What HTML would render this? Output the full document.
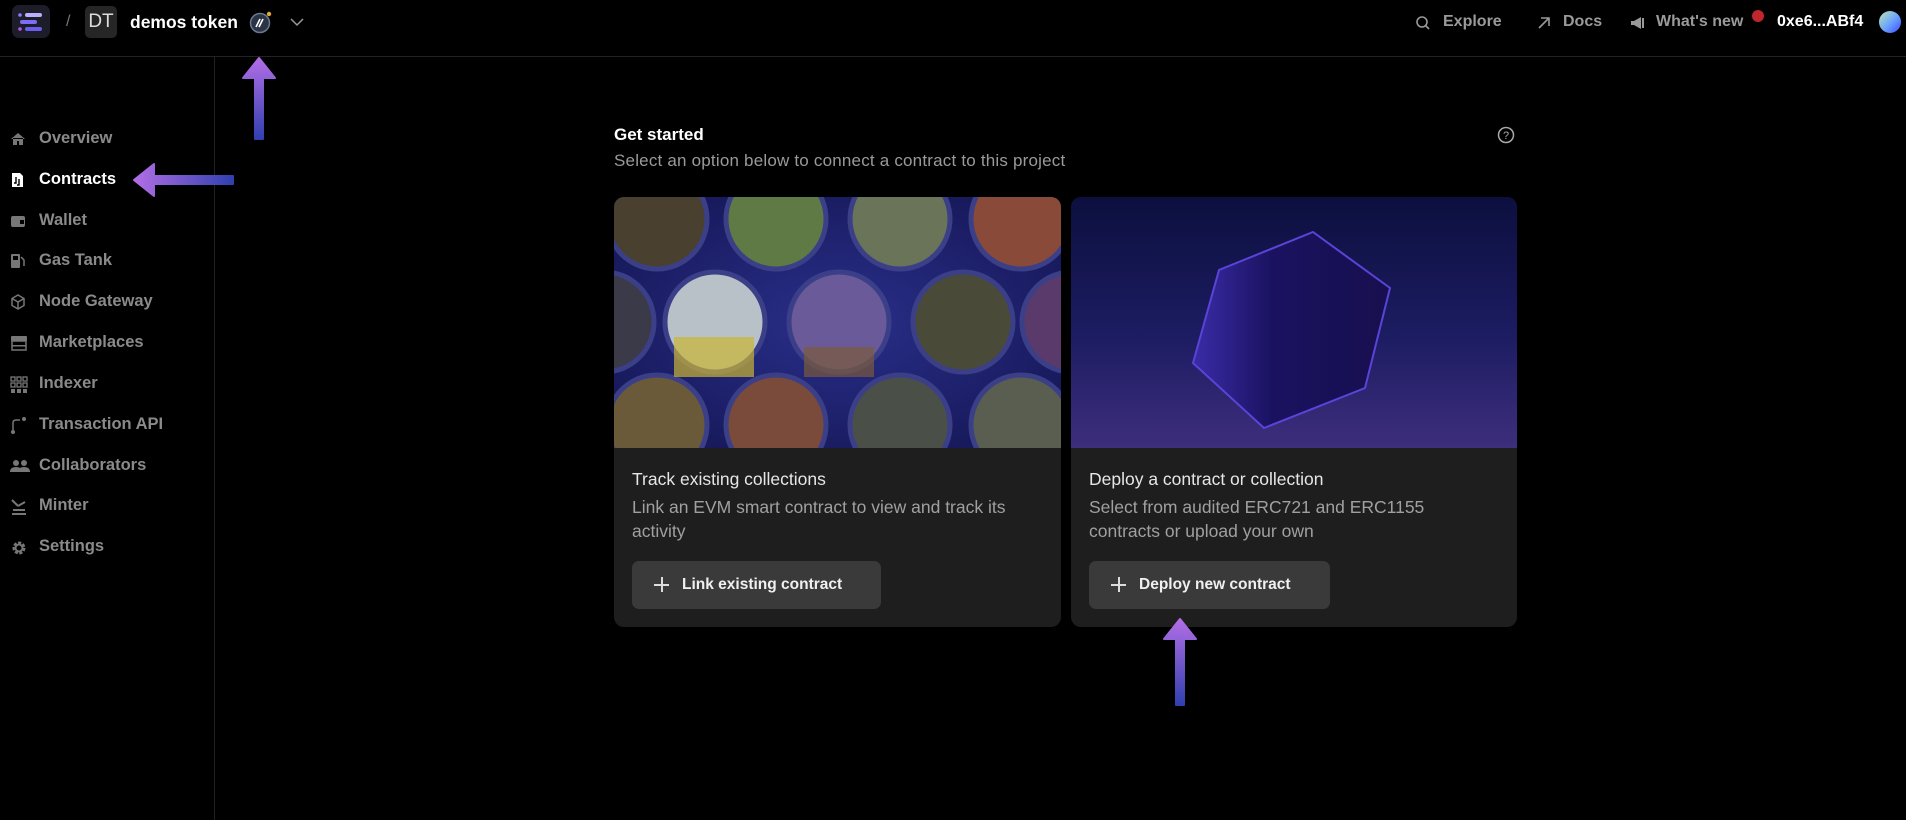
<!DOCTYPE html>
<html><head><meta charset="utf-8"><style>
*{margin:0;padding:0;box-sizing:border-box}
body{width:1906px;height:820px;background:#000;font-family:"Liberation Sans",sans-serif;color:#fff;position:relative;overflow:hidden}
.a{position:absolute}
.hdr{left:0;top:0;width:1906px;height:57px;border-bottom:1px solid #222}
.side{left:214px;top:57px;width:1px;height:763px;background:#222}
.nav{left:0;font-size:16.5px;font-weight:bold;color:#8a8a8a;display:flex;align-items:center;height:22px}
.nav svg{position:absolute;left:10px;top:3px}
.nav span{position:absolute;left:39px;white-space:nowrap;top:1px}
.card{background:#1e1e1e;border-radius:10px;overflow:hidden;width:447px;height:430px;top:197px}
.card .img{position:absolute;left:0;top:0;width:447px;height:251px}
.t{position:absolute;left:18px;top:272px;font-size:17.5px;color:#e6e6e6}
.d{position:absolute;left:18px;top:298px;font-size:17.5px;color:#a0a0a0;line-height:24px;width:410px}
.btn{position:absolute;left:18px;top:364px;height:48px;background:#3a3a3a;border-radius:7px;font-size:15.5px;font-weight:bold;color:#f0f0f0;display:flex;align-items:center;padding-left:50px}
.btn:before{content:"";position:absolute;left:22px;top:23px;width:15px;height:1.6px;background:#ddd}
.btn:after{content:"";position:absolute;left:29px;top:16px;width:1.6px;height:15px;background:#ddd}
.tn{font-size:16px;font-weight:bold;color:#9a9a9a;top:13px}
</style></head><body>
<div class="a hdr"></div>
<div class="a side"></div>
<div class="a" style="left:12px;top:5px;width:38px;height:33px;border-radius:7px;background:#1d1d2a"></div>
<svg class="a" style="left:12px;top:5px" width="38" height="33"><circle cx="8" cy="10" r="1.8" fill="#8a7cff"/><rect x="13" y="8" width="17" height="4" rx="2" fill="#b8b0ff"/><rect x="8" y="15" width="17" height="4" rx="2" fill="#7d6cf5"/><circle cx="8" cy="24" r="1.8" fill="#b056e8"/><rect x="13" y="22" width="17" height="4" rx="2" fill="#6a5cf0"/></svg>
<div class="a" style="left:66px;top:13px;font-size:16px;color:#777">/</div>
<div class="a" style="left:85px;top:6px;width:32px;height:32px;border-radius:5px;background:#262626;font-size:19px;color:#ddd;text-align:center;line-height:32px">DT</div>
<div class="a" style="left:130px;top:12px;font-size:17.5px;font-weight:bold">demos token</div>
<svg class="a" style="left:248px;top:10px" width="26" height="24"><circle cx="12" cy="13" r="9.5" fill="#2a3445" stroke="#6a7890" stroke-width="1.5"/><path d="M8 17l4-8M11 17l4-8" stroke="#fff" stroke-width="1.6"/><circle cx="21" cy="4" r="2.2" fill="#e0a93a"/></svg>
<svg class="a" style="left:289px;top:17px" width="16" height="10"><path d="M2 2l6 6 6-6" stroke="#999" stroke-width="1.5" fill="none"/></svg>
<svg class="a" style="left:1415px;top:15px" width="16" height="16"><circle cx="7" cy="7" r="5" stroke="#999" stroke-width="1.6" fill="none"/><path d="M11 11l3 3" stroke="#999" stroke-width="1.6"/></svg>
<div class="a tn" style="left:1443px">Explore</div>
<svg class="a" style="left:1536px;top:15px" width="16" height="16"><path d="M3 13L13 3M5 3h8v8" stroke="#999" stroke-width="1.6" fill="none"/></svg>
<div class="a tn" style="left:1563px">Docs</div>
<svg class="a" style="left:1630px;top:15px" width="16" height="16"><path d="M1 6h3l7-4v12l-7-4H1z" fill="#999"/><rect x="12" y="3" width="2" height="10" fill="#999"/></svg>
<div class="a tn" style="left:1656px">What's new</div>
<div class="a" style="left:1752px;top:10px;width:12px;height:12px;border-radius:50%;background:#c0262c"></div>
<div class="a" style="left:1777px;top:13px;font-size:16px;font-weight:bold">0xe6...ABf4</div>
<div class="a" style="left:1879px;top:11px;width:22px;height:22px;border-radius:50%;background:linear-gradient(135deg,#b9e8b0,#6aa0ff 55%,#3a4bff)"></div>
<div class="a nav" style="top:128px"><svg width="16" height="16"><path d="M1 8L8 2l7 6M3 7v7h4v-4h2v4h4V7" fill="#777"/></svg><span>Overview</span></div>
<div class="a nav" style="top:169px;color:#fff"><svg width="16" height="16"><path d="M2 1h8l3 3v11H2z" fill="#fff"/><path d="M6 5v6h-2M9 7v6h-2" stroke="#000" stroke-width="1.4" fill="none"/></svg><span>Contracts</span></div>
<div class="a nav" style="top:210px"><svg width="16" height="16"><rect x="1" y="3" width="14" height="11" rx="2" fill="#777"/><rect x="10" y="7" width="4" height="4" fill="#000"/></svg><span>Wallet</span></div>
<div class="a nav" style="top:250px"><svg width="18" height="16"><rect x="1" y="1" width="9" height="14" rx="1" fill="#777"/><rect x="3" y="3" width="5" height="4" fill="#000"/><path d="M11 4l3 3v6" stroke="#777" stroke-width="1.5" fill="none"/></svg><span>Gas Tank</span></div>
<div class="a nav" style="top:291px"><svg width="16" height="16"><path d="M8 1l6 3.5v7L8 15l-6-3.5v-7z M2 4.5L8 8l6-3.5M8 8v7" stroke="#777" stroke-width="1.5" fill="none"/></svg><span>Node Gateway</span></div>
<div class="a nav" style="top:332px"><svg width="18" height="16"><rect x="1" y="1" width="16" height="5" rx="1" fill="#777"/><rect x="2" y="6" width="14" height="9" stroke="#777" stroke-width="1.5" fill="none"/><rect x="2" y="10" width="14" height="1.5" fill="#777"/></svg><span>Marketplaces</span></div>
<div class="a nav" style="top:373px"><svg width="18" height="18"><g fill="none" stroke="#777" stroke-width="1.3"><rect x="1" y="1" width="4" height="4"/><rect x="7" y="1" width="4" height="4"/><rect x="13" y="1" width="4" height="4"/><rect x="1" y="7" width="4" height="4"/><rect x="7" y="7" width="4" height="4"/><rect x="13" y="7" width="4" height="4"/></g><g fill="#777"><rect x="1" y="13" width="4" height="4"/><rect x="7" y="13" width="4" height="4"/><rect x="13" y="13" width="4" height="4"/></g></svg><span>Indexer</span></div>
<div class="a nav" style="top:414px"><svg width="18" height="18"><circle cx="3" cy="15" r="2" fill="#777"/><path d="M3 13V6q0-3 3-3h4" stroke="#777" stroke-width="1.5" fill="none"/><circle cx="14" cy="2" r="2" fill="#777"/></svg><span>Transaction API</span></div>
<div class="a nav" style="top:455px"><svg width="20" height="16"><circle cx="6" cy="5" r="3" fill="#777"/><circle cx="14" cy="5" r="3" fill="#777"/><path d="M0 14q0-5 6-5t6 5zM8 14q0-5 6-5t6 5z" fill="#777"/></svg><span>Collaborators</span></div>
<div class="a nav" style="top:495px"><svg width="18" height="18"><path d="M2 2l6 6M8 8l7-4" stroke="#777" stroke-width="2"/><rect x="3" y="11" width="12" height="2" fill="#777"/><rect x="2" y="15" width="14" height="2" fill="#777"/></svg><span>Minter</span></div>
<div class="a nav" style="top:536px"><svg width="18" height="18"><circle cx="9" cy="9" r="5" stroke="#777" stroke-width="3" fill="none" stroke-dasharray="3 1.5"/><circle cx="9" cy="9" r="3.5" stroke="#777" stroke-width="2" fill="none"/></svg><span>Settings</span></div>
<div class="a" style="left:614px;top:125px;font-size:17px;font-weight:bold">Get started</div>
<div class="a" style="left:614px;top:151px;font-size:17px;color:#9a9a9a;letter-spacing:.2px;white-space:nowrap">Select an option below to connect a contract to this project</div>
<svg class="a" style="left:1497px;top:126px" width="18" height="18"><circle cx="9" cy="9" r="7.5" stroke="#aaa" stroke-width="1.5" fill="none"/><text x="9" y="13" font-size="11" fill="#aaa" text-anchor="middle" font-family="Liberation Sans">?</text></svg>
<div class="a card" style="left:614px">
<svg class="img" width="447" height="251"><defs><radialGradient id="bg1" cx="50%" cy="50%" r="70%"><stop offset="0" stop-color="#2a2f8a"/><stop offset="1" stop-color="#141552"/></radialGradient></defs>
<rect width="447" height="251" fill="url(#bg1)"/>
<g stroke="#3b3f88" stroke-width="5">
<circle cx="43" cy="22" r="50" fill="#4a4030"/><circle cx="162" cy="22" r="50" fill="#5f7a45"/><circle cx="286" cy="22" r="50" fill="#6a7458"/><circle cx="407" cy="22" r="50" fill="#8a4a3a"/>
<circle cx="-10" cy="125" r="50" fill="#3a3a48"/><circle cx="101" cy="125" r="50" fill="#b8c0c8"/><circle cx="225" cy="125" r="50" fill="#6a5a9a"/><circle cx="349" cy="125" r="50" fill="#4a4a38"/><circle cx="458" cy="125" r="50" fill="#5a3a6a"/>
<circle cx="43" cy="228" r="50" fill="#6a5a3a"/><circle cx="162" cy="228" r="50" fill="#7a4a3a"/><circle cx="286" cy="228" r="50" fill="#4a5048"/><circle cx="407" cy="228" r="50" fill="#5a5e50"/></g>
<rect x="60" y="140" width="80" height="40" fill="#c9b534" opacity=".7"/><rect x="190" y="150" width="70" height="30" fill="#7a5a3a" opacity=".7"/></svg>
<div class="t">Track existing collections</div>
<div class="d">Link an EVM smart contract to view and track its activity</div>
<div class="btn" style="width:249px">Link existing contract</div>
</div>
<div class="a card" style="left:1071px;width:446px">
<svg class="img" width="446" height="251"><defs><linearGradient id="bg2" x1="0" y1="0" x2="0" y2="1"><stop offset="0" stop-color="#0c0f3e"/><stop offset=".55" stop-color="#1c1c62"/><stop offset="1" stop-color="#3e2e7c"/></linearGradient><linearGradient id="hx" x1="0" y1="0" x2="1" y2="0"><stop offset="0" stop-color="#3a2ca8"/><stop offset=".4" stop-color="#1a1260"/><stop offset="1" stop-color="#170f4e"/></linearGradient></defs>
<rect width="446" height="251" fill="url(#bg2)"/>
<polygon points="242,35 319,91 294,191 193,231 122,166 148,73" fill="url(#hx)" stroke="#5a44d8" stroke-width="2"/></svg>
<div class="t">Deploy a contract or collection</div>
<div class="d">Select from audited ERC721 and ERC1155 contracts or upload your own</div>
<div class="btn" style="width:241px">Deploy new contract</div>
</div>
<svg class="a" style="left:0;top:0" width="1906" height="820"><defs>
<linearGradient id="ag1" x1="0" y1="0" x2="0" y2="1"><stop offset="0" stop-color="#b26ee6"/><stop offset="1" stop-color="#3140b0"/></linearGradient>
<linearGradient id="ag2" x1="0" y1="0" x2="1" y2="0"><stop offset="0" stop-color="#b26ee6"/><stop offset="1" stop-color="#3140b0"/></linearGradient></defs>
<path d="M259 58l16 20h-12v61h-8V78h-12z" fill="url(#ag1)" stroke="url(#ag1)" stroke-width="2" stroke-linejoin="round"/>
<path d="M134 180l20-16v12h79v8h-79v12z" fill="url(#ag2)" stroke="url(#ag2)" stroke-width="2" stroke-linejoin="round"/>
<path d="M1180 619l16 20h-12v66h-8v-66h-12z" fill="url(#ag1)" stroke="url(#ag1)" stroke-width="2" stroke-linejoin="round"/>
</svg>
</body></html>
